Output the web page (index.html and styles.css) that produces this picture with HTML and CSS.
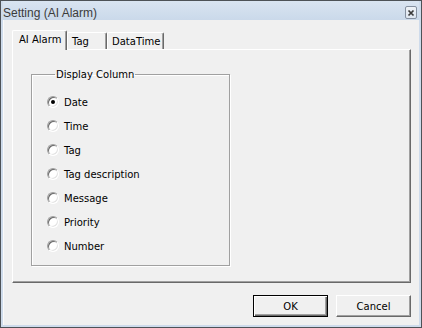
FILE: index.html
```html
<!DOCTYPE html>
<html lang="en">
<head>
    <meta charset="UTF-8">
    <title>Setting (AI Alarm)</title>
    <link rel="stylesheet" href="styles.css">
</head>
<body>
    <div class="window">
        <!-- Barra de título -->
        <div class="titlebar">
            <span class="title">Setting (AI Alarm)</span>
            <span class="close-btn">
                <svg width="10" height="10" viewBox="0 0 10 10">
                    <path d="M2.5 2.5 L7.5 7.5 M7.5 2.5 L2.5 7.5" stroke="#3a3a3a" stroke-width="1.7"/>
                </svg>
            </span>
        </div>

        <div class="client">
            <!-- Abas -->
            <div class="tabs">
                <div class="tab active">AI Alarm</div>
                <div class="tab">Tag</div>
                <div class="tab">DataTime</div>
            </div>

            <div class="panel">
                <fieldset class="group">
                    <legend>Display Column</legend>
                    <div class="radio-row"><span class="radio checked"></span>Date</div>
                    <div class="radio-row"><span class="radio"></span>Time</div>
                    <div class="radio-row"><span class="radio"></span>Tag</div>
                    <div class="radio-row"><span class="radio"></span>Tag description</div>
                    <div class="radio-row"><span class="radio"></span>Message</div>
                    <div class="radio-row"><span class="radio"></span>Priority</div>
                    <div class="radio-row"><span class="radio"></span>Number</div>
                </fieldset>
            </div>

            <div class="buttons">
                <button class="btn default">OK</button>
                <button class="btn">Cancel</button>
            </div>
        </div>
    </div>
</body>
</html>
```

FILE: styles.css
```css
* {
    margin: 0;
    padding: 0;
    box-sizing: border-box;
}

body {
    font-family: 'DejaVu Sans', Tahoma, sans-serif;
    font-size: 10px;
    color: #000;
    background: #f0f0f0;
}

.window {
    width: 422px;
    height: 328px;
    border: 1px solid #4d5257;
    background: #cedbeb;
    padding: 0 2px 2px;
    display: flex;
    flex-direction: column;
}

.titlebar {
    height: 19px;
    display: flex;
    align-items: center;
    justify-content: space-between;
    background: linear-gradient(#d9e4f1, #cad9ea);
    padding: 0 2px 0 0;
}

.title {
    font-family: 'Liberation Sans', Arial, sans-serif;
    font-size: 12px;
    color: #3b3b3b;
    margin-top: 4px;
}

.close-btn {
    width: 12px;
    height: 13px;
    border: 1px solid #8590a0;
    border-radius: 2px;
    background: linear-gradient(#eef2f7, #dde5ef);
    display: flex;
    align-items: center;
    justify-content: center;
    margin-top: 4px;
}

.close-btn svg {
    display: block;
}

.client {
    flex: 1;
    background: #f0f0f0;
    border-left: 1px solid #fafafa;
    padding: 10px 8px 0 8px;
    display: flex;
    flex-direction: column;
}

.tabs {
    display: flex;
    align-items: flex-end;
    height: 19px;
    position: relative;
    z-index: 1;
}

.tab {
    height: 17px;
    padding: 3px 0 0 4px;
    border: 1px solid #fff;
    border-right-color: #696969;
    border-bottom: none;
    box-shadow: inset -1px 0 0 #a0a0a0;
    background: #f0f0f0;
    border-radius: 2px 2px 0 0;
    white-space: nowrap;
}

.tab:nth-child(2) {
    width: 40px;
}

.tab:nth-child(3) {
    width: 57px;
}

.tab.active {
    height: 20px;
    width: 55px;
    margin-bottom: -1px;
    padding: 3px 0 0 6px;
}

.panel {
    height: 234px;
    border: 1px solid #fff;
    border-right-color: #696969;
    border-bottom-color: #696969;
    box-shadow: inset -1px -1px 0 #a0a0a0;
    padding: 18px 0 0 18px;
}

.group {
    width: 199px;
    height: 198px;
    border: 1px solid #a0a0a0;
    box-shadow: 1px 1px 0 #fff, inset 1px 1px 0 #fff;
    padding: 9px 0 0 15px;
}

.group legend {
    margin-left: 8px;
    padding: 0 1px;
    line-height: 13px;
}

.radio-row {
    height: 24px;
    display: flex;
    align-items: center;
}

.radio {
    width: 12px;
    height: 12px;
    border-radius: 50%;
    border: 1px solid;
    border-color: #a0a0a0 #fff #fff #a0a0a0;
    box-shadow: inset 1px 1px 0 #696969, inset -1px -1px 0 #e3e3e3;
    background: #fff;
    margin-right: 5px;
    display: flex;
    align-items: center;
    justify-content: center;
}

.radio.checked::after {
    content: '';
    width: 4px;
    height: 4px;
    border-radius: 50%;
    background: #000;
}

.buttons {
    display: flex;
    justify-content: flex-end;
    gap: 8px;
    margin-top: 12px;
}

.btn {
    width: 75px;
    height: 22px;
    font-family: inherit;
    font-size: 10px;
    color: #000;
    background: #f0f0f0;
    border: 1px solid;
    border-color: #fff #696969 #696969 #fff;
    box-shadow: inset -1px -1px 0 #a0a0a0;
}

.btn.default {
    border: 1px solid #000;
    box-shadow: inset 1px 1px 0 #fff, inset -1px -1px 0 #696969, inset -2px -2px 0 #a0a0a0;
}
```
